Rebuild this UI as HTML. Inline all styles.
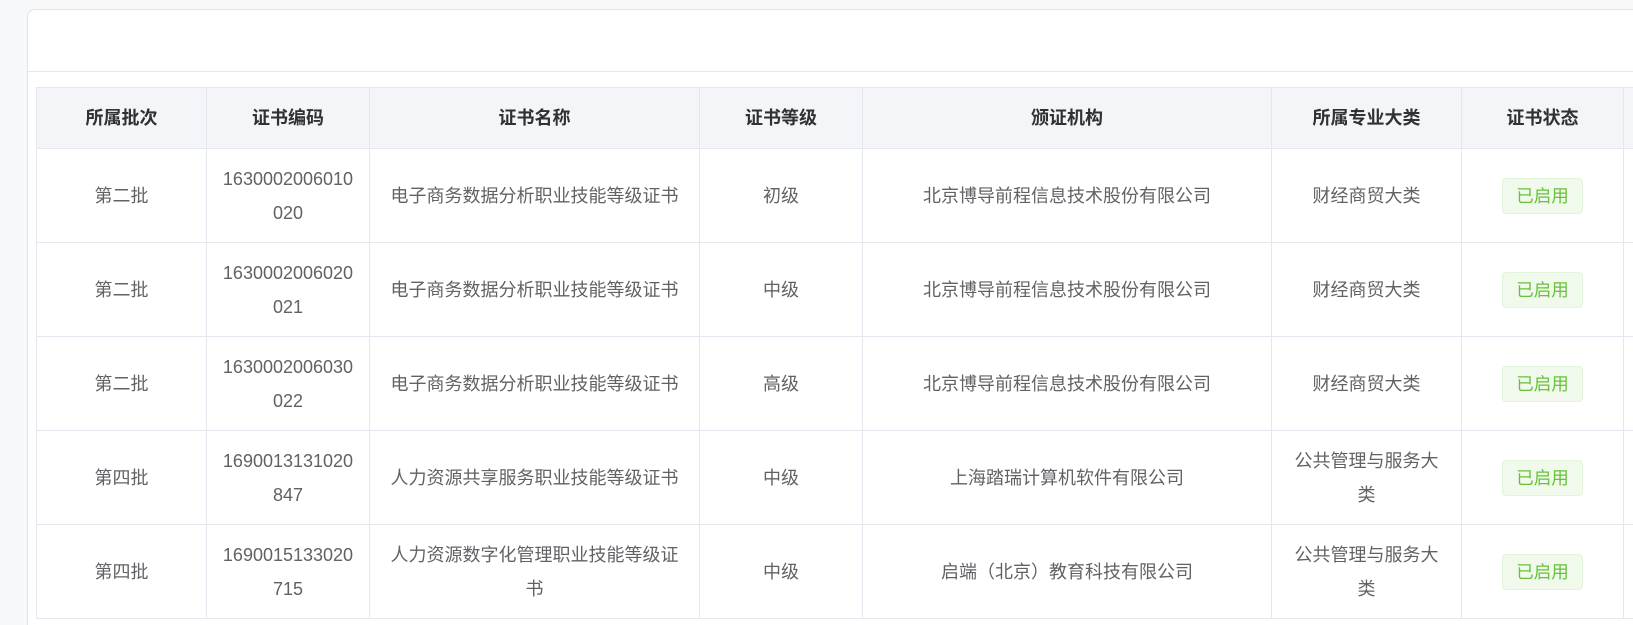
<!DOCTYPE html>
<html><head><meta charset="utf-8"><style>
html,body{margin:0;padding:0;width:1633px;height:624px;overflow:hidden;background:#f7f8fa;font-family:"Liberation Sans","Noto Sans CJK SC",sans-serif;}
.card{position:absolute;left:27px;top:9px;width:1605px;height:615px;background:#fff;border:1px solid #dfe3ea;border-bottom:none;border-right:none;border-radius:8px 0 0 0;overflow:hidden;}
.hl{position:absolute;left:0;top:61px;width:1605px;border-top:1px solid #e6e8ee;}
table{position:absolute;left:8px;top:77px;border-collapse:collapse;table-layout:fixed;width:1647px;}
td,th{border:1px solid #e4e7ed;text-align:center;font-size:18px;color:#606266;line-height:34px;padding:0 16px;word-break:break-all;}
td.n{padding:0 14px;}
th{background:#f3f5f8;color:#303133;font-weight:bold;height:60px;}
td{height:93px;}
.tag{display:inline-block;width:79px;height:34px;line-height:34px;background:#f0f9eb;border:1px solid #e1f3d8;border-radius:4px;color:#67c23a;font-size:17.5px;}
</style></head><body>
<div class="card"><div class="hl"></div>
<table>
<colgroup><col style="width:170px"><col style="width:163px"><col style="width:330px"><col style="width:163px"><col style="width:409px"><col style="width:190px"><col style="width:162px"><col style="width:60px"></colgroup>
<tr><th>所属批次</th><th>证书编码</th><th>证书名称</th><th>证书等级</th><th>颁证机构</th><th>所属专业大类</th><th>证书状态</th><th></th></tr>
<tr><td>第二批</td><td class="n">1630002006010020</td><td>电子商务数据分析职业技能等级证书</td><td>初级</td><td>北京博导前程信息技术股份有限公司</td><td>财经商贸大类</td><td><span class="tag">已启用</span></td><td></td></tr>
<tr><td>第二批</td><td class="n">1630002006020021</td><td>电子商务数据分析职业技能等级证书</td><td>中级</td><td>北京博导前程信息技术股份有限公司</td><td>财经商贸大类</td><td><span class="tag">已启用</span></td><td></td></tr>
<tr><td>第二批</td><td class="n">1630002006030022</td><td>电子商务数据分析职业技能等级证书</td><td>高级</td><td>北京博导前程信息技术股份有限公司</td><td>财经商贸大类</td><td><span class="tag">已启用</span></td><td></td></tr>
<tr><td>第四批</td><td class="n">1690013131020847</td><td>人力资源共享服务职业技能等级证书</td><td>中级</td><td>上海踏瑞计算机软件有限公司</td><td>公共管理与服务大类</td><td><span class="tag">已启用</span></td><td></td></tr>
<tr><td>第四批</td><td class="n">1690015133020715</td><td>人力资源数字化管理职业技能等级证书</td><td>中级</td><td>启端（北京）教育科技有限公司</td><td>公共管理与服务大类</td><td><span class="tag">已启用</span></td><td></td></tr>
</table>
</div>
</body></html>
